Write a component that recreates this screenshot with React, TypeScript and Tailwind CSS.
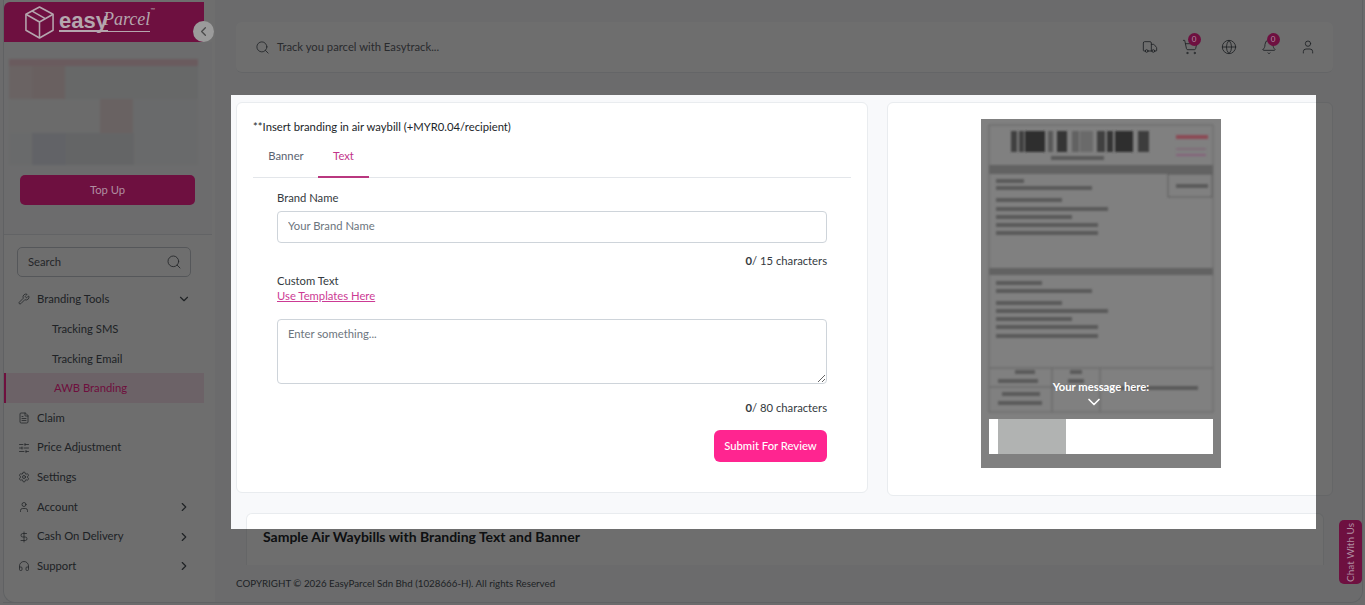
import { Bell, ChevronDown, ChevronLeft, ChevronRight, DollarSign, FileText, Globe, Headphones, Search, Settings, ShoppingCart, SlidersHorizontal, Truck, User, Wrench } from "lucide-react";

const menuTop = [
    { label: "Claim", icon: FileText, arrow: false },
    { label: "Price Adjustment", icon: SlidersHorizontal, arrow: false },
    { label: "Settings", icon: Settings, arrow: false },
    { label: "Account", icon: User, arrow: true },
    { label: "Cash On Delivery", icon: DollarSign, arrow: true },
    { label: "Support", icon: Headphones, arrow: true },
];

// blurred sample waybill, it is a picture in the original
function Waybill() {
    const bars: [number, number, string][] = [
        [1011, 6, "#404040"], [1019, 5, "#404040"], [1025, 20, "#2e2e2e"], [1048, 5, "#585858"], [1057, 10, "#343434"],
        [1072, 7, "#626262"], [1080, 13, "#6a6a6a"], [1097, 8, "#404040"], [1107, 6, "#343434"], [1115, 18, "#2e2e2e"], [1138, 11, "#3e3e3e"],
    ];
    const lines = [
        [996, 181, 28], [996, 188, 96], [996, 200, 66], [996, 209, 112], [996, 217, 76], [996, 225, 102], [996, 233, 102],
        [996, 283, 46], [996, 291, 96], [996, 303, 66], [996, 311, 112], [996, 319, 76], [996, 327, 102], [996, 336, 102],
        [1015, 372, 20], [998, 381, 40], [1002, 394, 38], [998, 403, 44], [1070, 372, 12], [1068, 381, 16], [1116, 388, 82],
        [1051, 158, 53], [1176, 186, 32],
    ];
    return (
        <svg width="240" height="349" viewBox="981 119 240 349" className="block">
            <defs>
                <filter id="soft"><feGaussianBlur stdDeviation="1.2" /></filter>
            </defs>
            <rect x="981" y="119" width="240" height="349" fill="#808080" />
            <g filter="url(#soft)">
                <rect x="989" y="125" width="224" height="287" fill="none" stroke="#686868" />
                <rect x="989" y="165" width="224" height="9" fill="#626262" />
                <rect x="989" y="268" width="224" height="7" fill="#626262" />
                <rect x="1168" y="174" width="44" height="23" fill="none" stroke="#5c5c5c" />
                {bars.map(([x, w, fill]) => (
                    <rect key={x} x={x} y="131" width={w} height="21" fill={fill} />
                ))}
                {lines.map(([x, y, w]) => (
                    <rect key={`${x}-${y}`} x={x} y={y - 2} width={w} height="4" fill="#5a5a5a" />
                ))}
                <rect x="1176" y="135" width="32" height="4" fill="#8c4a55" />
                <rect x="1176" y="148" width="30" height="2" fill="#7f6a78" />
                <rect x="1176" y="154" width="30" height="2" fill="#85607a" />
                <path d="M989 368H1213M1052 368V412M1100 368V412M989 387H1100" stroke="#626262" fill="none" />
            </g>
        </svg>
    );
}

function BrandingForm() {
    return (
        <div className="w-[632px] h-[391px] shrink-0 bg-white rounded-md border border-[#e9ecef] pt-[16px] px-[16px]">
            <p className="text-[11.25px] leading-[16px] text-[#212529]">**Insert branding in air waybill (+MYR0.04/recipient)</p>
            <div className="flex border-b border-[#e3e6ea] w-[598px] h-[43px]">
                <div className="w-[65px] flex items-center justify-center text-[11.25px] text-[#596270] pl-[1px]">Banner</div>
                <div className="w-[51px] flex items-center justify-center text-[11.25px] text-[#c2338a] border-b-2 border-[#b9377f] h-[43px] pt-[2px]">Text</div>
            </div>
            <div className="ml-[24px] w-[550px] mt-[12px] text-[11.25px] text-[#343a40]">
                <label className="block leading-[16px]">Brand Name</label>
                <input placeholder="Your Brand Name" className="block w-full h-[32px] mt-[5px] px-[10px] pb-[3px] border border-[#ced4da] rounded-[4px] text-[11.25px] outline-none placeholder:text-[#6c757d]" />
                <p className="text-right mt-[10px] leading-[16px]"><b className="font-bold">0</b>/ 15 characters</p>
                <p className="mt-[4px] leading-[16px]">Custom Text</p>
                <a className="block leading-[14px] text-[#cc3a94] underline">Use Templates Here</a>
                <textarea placeholder="Enter something..." className="block w-full h-[65px] mt-[16px] px-[10px] py-[6px] border border-[#ced4da] rounded-[4px] text-[11.25px] outline-none placeholder:text-[#6c757d]" />
                <p className="text-right mt-[16px] leading-[16px]"><b className="font-bold">0</b>/ 80 characters</p>
                <div className="flex justify-end mt-[14px]">
                    <button className="w-[113px] h-[32px] rounded-[6px] bg-[#ff2590] text-white text-[11.25px] font-medium">Submit For Review</button>
                </div>
            </div>
        </div>
    );
}

export default function App() {
    return (
        <div className="relative w-[1365px] h-[605px] overflow-hidden bg-[#f8f9fb] flex text-[#212529]" style={{ fontFamily: "Lato, 'Liberation Sans', sans-serif" }}>
            {/* Sidebar */}
            <aside className="w-[212px] h-[603px] shrink-0 ml-[3px] border-l border-b border-[#dfe2e6] rounded-bl-[12px] bg-white flex flex-col">
                <div className="w-[200px] h-[40px] mt-[2px] rounded-tl-[6px] pl-[20px] flex items-center relative z-20 bg-[#6e1040] text-[#b5a6ae]">
                    <svg width="31" height="35" viewBox="0 0 32 36" fill="none" stroke="currentColor" strokeWidth="1.6" strokeLinejoin="round">
                        <path d="M16 2L30 9.5V26L16 34L2 26V9.5Z" />
                        <path d="M2 9.5L16 17.5L30 9.5M16 17.5V34M8 6L22 14" />
                    </svg>
                    <div className="ml-[4px] -mt-[6px] flex items-end leading-none">
                        <span className="font-black text-[22px] border-b-2 border-current leading-[19px]" style={{ fontFamily: "'Liberation Sans', sans-serif" }}>easy</span>
                        <span className="italic text-[18px] border-b border-current leading-[24px] -ml-[5px]" style={{ fontFamily: "'Liberation Serif', serif" }}>Parcel</span>
                        <span className="text-[6px] self-start">™</span>
                    </div>
                </div>
                <div className="h-[193px] w-[208px] border-b border-[#e3e6ea] bg-[#fafbfc] flex flex-col">
                    {/* blurred balance tiles */}
                    <div className="mt-[17px] ml-[5px] w-[189px] h-[106px] bg-[#f4f6f7] flex flex-col blur-[1px]">
                        <div className="h-[7px] bg-[#f6d3da]" />
                        <div className="h-[33px] flex">
                            <div className="w-[23px] bg-[#f5e6e6]" />
                            <div className="w-[33px] bg-[#f4dfdf]" />
                            <div className="flex-1 bg-[#eef0f1]" />
                        </div>
                        <div className="h-[34px] flex">
                            <div className="w-[91px] bg-[#f7f8f8]" />
                            <div className="w-[33px] bg-[#f4e3e3]" />
                        </div>
                        <div className="h-[32px] flex">
                            <div className="w-[23px]" />
                            <div className="w-[34px] bg-[#e4e6ee]" />
                            <div className="w-[68px] bg-[#e8eaed]" />
                        </div>
                    </div>
                    <div className="relative z-20 mt-[10px] ml-[16px] w-[175px] h-[30px] rounded-[5px] bg-[#6e1040] text-[#b08ea0] text-[11.25px] flex items-center justify-center">Top Up</div>
                </div>
                <div className="mx-[13px] mt-[12px] w-[174px] h-[30px] border border-[#c6cad0] rounded-[5px] flex items-center justify-between pl-[10px] pr-[8px] text-[11.25px] text-[#55595f]">
                    Search
                    <Search size={16} strokeWidth={1.3} />
                </div>
                <nav className="text-[11.25px] text-[#495057] mt-[6px]">
                    <div className="h-[30px] w-[187px] pl-[14px] pt-[2px] flex items-center">
                        <Wrench size={12} strokeWidth={1.5} />
                        <span className="ml-[7px] flex-1">Branding Tools</span>
                        <ChevronDown size={14} />
                    </div>
                    <div className="h-[30px] pl-[48px] pt-[2px] flex items-center">Tracking SMS</div>
                    <div className="h-[30px] pl-[48px] pt-[2px] flex items-center">Tracking Email</div>
                    <div className="h-[30px] w-[200px] pl-[48px] flex items-center border-l-2 border-[#ff2590] bg-[#fbe3ee] text-[#ff2590]">AWB Branding</div>
                    {menuTop.map(({ label, icon: Icon, arrow }) => (
                        <div key={label} className="h-[29.6px] w-[187px] pl-[14px] pt-[1px] flex items-center">
                            <Icon size={12} strokeWidth={1.5} />
                            <span className="ml-[7px] flex-1">{label}</span>
                            {arrow && <ChevronRight size={14} />}
                        </div>
                    ))}
                </nav>
            </aside>

            {/* Main */}
            <main className="flex-1 min-w-0 pl-[21px] flex flex-col">
                <header className="w-[1097px] h-[51px] mt-[22px] shrink-0 bg-white rounded-md border-b border-[#e8eaee] flex items-center pl-[19px] pr-[17px] text-[11.25px] text-[#495057]">
                    <Search size={15} strokeWidth={1.3} />
                    <span className="ml-[7px] flex-1 text-[#5f656c]">Track you parcel with Easytrack...</span>
                    <div className="flex items-center gap-[23.5px]">
                        <Truck size={16} strokeWidth={1.3} />
                        <div className="relative">
                            <ShoppingCart size={16} strokeWidth={1.3} />
                            <span className="absolute -top-[6px] left-[6px] w-[13px] h-[13px] rounded-full text-[8px] leading-[13px] text-center z-20 bg-[#6e1040] text-[#b08ea0]">0</span>
                        </div>
                        <Globe size={16} strokeWidth={1.3} />
                        <div className="relative">
                            <Bell size={16} strokeWidth={1.3} />
                            <span className="absolute -top-[6px] left-[6px] w-[13px] h-[13px] rounded-full text-[8px] leading-[13px] text-center z-20 bg-[#6e1040] text-[#b08ea0]">0</span>
                        </div>
                        <User size={16} strokeWidth={1.3} />
                    </div>
                </header>
                <div className="flex gap-[19px] mt-[29px] shrink-0 items-start">
                    <BrandingForm />
                    <div className="w-[446px] h-[394px] bg-white rounded-md border border-[#e9ecef] pt-[16px] pl-[93px]">
                        <div className="relative w-[240px] h-[349px]">
                            <Waybill />
                            <div className="absolute left-0 right-0 top-[260px] text-center text-white text-[11.25px] font-bold leading-[16px]">Your message here:</div>
                            <ChevronDown size={20} strokeWidth={2} className="absolute left-[103px] top-[273px] text-white" />
                            <div className="absolute left-[8px] top-[300px] w-[224px] h-[35px] bg-white">
                                <div className="ml-[9px] w-[68px] h-[35px] bg-[#b1b3b2]" />
                            </div>
                        </div>
                    </div>
                </div>
                <div className="w-[1078px] h-[52px] ml-[10px] mt-[17px] shrink-0 bg-white rounded-t-md border-x border-t border-[#e9ecef] pl-[16px] pt-[14px]">
                    <h2 className="text-[14px] font-bold text-[#212529] leading-[18px]">Sample Air Waybills with Branding Text and Banner</h2>
                </div>
                <footer className="mt-[11px] text-[9.75px] leading-[14px] text-[#495057]">COPYRIGHT © 2026 EasyParcel Sdn Bhd (1028666-H). All rights Reserved</footer>
            </main>

            {/* page frame edge, right and bottom */}
            <div className="absolute left-[3px] right-[2px] top-0 bottom-[2px] border-r border-b border-[#dfe2e6] rounded-br-[12px] pointer-events-none" />

            {/* Tour spotlight dims everything but the highlighted block */}
            <div className="absolute left-[231px] top-[95px] w-[1085px] h-[434px] z-10 shadow-[0_0_0_2000px_rgba(0,0,0,0.57)]" />

            <button className="absolute z-20 left-[193px] top-[21px] w-[21px] h-[21px] rounded-full bg-[#9b9b9b] text-[#4a4a4a] flex items-center justify-center">
                <ChevronLeft size={15} />
            </button>
            <div className="absolute z-20 left-[1339px] top-[520px] w-[23px] h-[64px] rounded-[5px] bg-[#6e1040] text-[#b08ea0] flex items-center justify-center">
                <span className="-rotate-90 whitespace-nowrap text-[10px]">Chat With Us</span>
            </div>
        </div>
    );
}
